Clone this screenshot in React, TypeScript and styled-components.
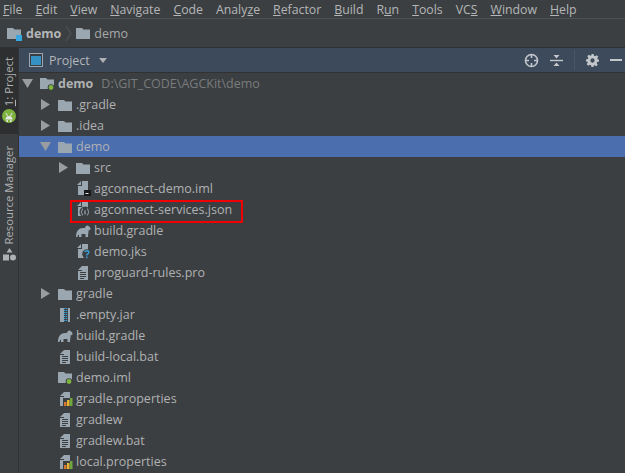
import * as React from "react";
import styled, { createGlobalStyle } from "styled-components";

const GlobalStyle = createGlobalStyle`
  html, body {
    margin: 0;
    padding: 0;
    width: 625px;
    height: 473px;
    overflow: hidden;
    background: #3c3f41;
  }
`;

type IconKind =
  | "folder"
  | "module"
  | "text"
  | "iml"
  | "json"
  | "gradle"
  | "keystore"
  | "jar"
  | "props";

interface Item {
  name: string;
  depth: number;
  icon: IconKind;
  arrow?: "open" | "closed";
  selected?: boolean;
  marked?: boolean;
  bold?: boolean;
  hint?: string;
}

const menus: [string, string, string][] = [
  ["", "F", "ile"],
  ["", "E", "dit"],
  ["", "V", "iew"],
  ["", "N", "avigate"],
  ["", "C", "ode"],
  ["Analy", "z", "e"],
  ["", "R", "efactor"],
  ["", "B", "uild"],
  ["R", "u", "n"],
  ["", "T", "ools"],
  ["VC", "S", ""],
  ["", "W", "indow"],
  ["", "H", "elp"],
];

const items: Item[] = [
  { name: "demo", depth: 0, icon: "module", arrow: "open", bold: true, hint: "D:\\GIT_CODE\\AGCKit\\demo" },
  { name: ".gradle", depth: 1, icon: "folder", arrow: "closed" },
  { name: ".idea", depth: 1, icon: "folder", arrow: "closed" },
  { name: "demo", depth: 1, icon: "folder", arrow: "open", selected: true },
  { name: "src", depth: 2, icon: "folder", arrow: "closed" },
  { name: "agconnect-demo.iml", depth: 2, icon: "iml" },
  { name: "agconnect-services.json", depth: 2, icon: "json", marked: true },
  { name: "build.gradle", depth: 2, icon: "gradle" },
  { name: "demo.jks", depth: 2, icon: "keystore" },
  { name: "proguard-rules.pro", depth: 2, icon: "text" },
  { name: "gradle", depth: 1, icon: "folder", arrow: "closed" },
  { name: ".empty.jar", depth: 1, icon: "jar" },
  { name: "build.gradle", depth: 1, icon: "gradle" },
  { name: "build-local.bat", depth: 1, icon: "text" },
  { name: "demo.iml", depth: 1, icon: "module" },
  { name: "gradle.properties", depth: 1, icon: "props" },
  { name: "gradlew", depth: 1, icon: "text" },
  { name: "gradlew.bat", depth: 1, icon: "text" },
  { name: "local.properties", depth: 1, icon: "props" },
];

const FOLDER = "M0 2h6l1.500 1.500H14V13H0z";
const SHEET = "M6 0h6v14H2V5h4z";
const FOLD = "M5 0v4H1z";

const FileIcon: React.FC<{ kind: IconKind }> = ({ kind }) => {
  switch (kind) {
    case "folder":
      return (
        <svg width="14" height="14" viewBox="0 0 14 14">
          <path d={FOLDER} fill="#9aa7b0" />
        </svg>
      );
    case "module":
      return (
        <svg width="15" height="15" viewBox="0 0 15 15">
          <path d={FOLDER} fill="#9aa7b0" />
          <circle cx="11" cy="11.500" r="3.300" fill="#3c3f41" />
          <circle cx="11" cy="11.500" r="2.400" fill="#7eb33f" />
        </svg>
      );
    case "text":
      return (
        <svg width="14" height="14" viewBox="0 0 14 14">
          <path d={SHEET} fill="#9aa7b0" />
          <path d={FOLD} fill="#9aa7b0" transform="translate(1 0)" />
          <path d="M4 6.500h6M4 8.500h6M4 10.500h6M4 12.500h4" stroke="#3c3f41" strokeWidth="1" />
        </svg>
      );
    case "iml":
      return (
        <svg width="15" height="15" viewBox="0 0 15 15">
          <path d={SHEET} fill="#9aa7b0" />
          <path d={FOLD} fill="#9aa7b0" />
          <rect x="8" y="9" width="7" height="6" fill="#17191a" />
          <path d="M9.500 12.500h3" stroke="#e8e8e8" strokeWidth="1" />
        </svg>
      );
    case "json":
      return (
        <svg width="15" height="15" viewBox="0 0 15 15">
          <path d={SHEET} fill="#9aa7b0" />
          <path d={FOLD} fill="#9aa7b0" />
          <circle cx="9" cy="10" r="5.500" fill="#3c3f41" />
          <path
            d="M7 6.500C5.500 7 6.500 9.200 5 10c1.500.8.500 3 2 3.500M11 6.500c1.500.5.500 2.700 2 3.500-1.500.8-.5 3-2 3.500"
            stroke="#9aa7b0"
            strokeWidth="1"
            fill="none"
          />
          <path d="M9 8.500v4" stroke="#9aa7b0" strokeWidth="1.200" />
        </svg>
      );
    case "gradle":
      return (
        <svg width="15" height="12" viewBox="0 0 15 12">
          <path
            d="M0 12C0 6 3 3 7 3h2c.5-2 2-3 3.500-2C14.500 2 15 4 14 5.500L12.800 4.500C12.500 7 12 10 12 12H9.500V9h-4v3H3V9.500C2 10 1.500 11 1.500 12z"
            fill="#9aa7b0"
          />
        </svg>
      );
    case "keystore":
      return (
        <svg width="15" height="15" viewBox="0 0 15 15">
          <path d={SHEET} fill="#9aa7b0" />
          <path d={FOLD} fill="#9aa7b0" />
          <circle cx="11" cy="10" r="4.800" fill="#3c3f41" />
          <path d="M8.800 8.200c.3-2 4-2 4 .1 0 1.600-2 1.500-2 3.200" stroke="#389fd6" strokeWidth="1.500" fill="none" />
          <rect x="10" y="12.600" width="1.600" height="1.600" fill="#389fd6" />
        </svg>
      );
    case "jar":
      return (
        <svg width="14" height="14" viewBox="0 0 14 14">
          <rect x="2" y="0" width="10" height="14" fill="#9aa7b0" />
          <rect x="6" y="0" width="4" height="14" fill="#3c3f41" />
          <path d="M6.500 0v14M8.500 0v14" stroke="#389fd6" strokeWidth="1.500" strokeDasharray="1 1" />
        </svg>
      );
    case "props":
      return (
        <svg width="16" height="14" viewBox="0 0 16 14">
          <path d={SHEET} fill="#9aa7b0" />
          <path d={FOLD} fill="#9aa7b0" transform="translate(1 0)" />
          <rect x="5" y="6" width="11" height="8" fill="#3c3f41" />
          <rect x="6" y="10" width="2.500" height="4" fill="#d9762e" />
          <rect x="9" y="8" width="2.500" height="6" fill="#e8b530" />
          <rect x="12" y="6" width="2.500" height="8" fill="#6ea83c" />
        </svg>
      );
    default:
      return null;
  }
};

const App: React.FC = () => (
  <Window>
    <GlobalStyle />
    <MenuBar>
      {menus.map(([before, key, after]) => (
        <MenuItem key={before + key + after}>
          {before}
          <u>{key}</u>
          {after}
        </MenuItem>
      ))}
    </MenuBar>
    <Breadcrumb>
      <CrumbIcon>
        <svg width="15" height="15" viewBox="0 0 15 15">
          <path d={FOLDER} fill="#9aa7b0" />
          <rect x="9" y="9" width="6" height="6" fill="#3aa8e0" />
        </svg>
      </CrumbIcon>
      <CrumbBold>demo</CrumbBold>
      <svg width="7" height="17" viewBox="0 0 7 17">
        <path d="M1 1l5 7.500L1 16" stroke="#55585a" fill="none" />
      </svg>
      <CrumbIcon>
        <svg width="14" height="14" viewBox="0 0 14 14">
          <path d={FOLDER} fill="#9aa7b0" />
        </svg>
      </CrumbIcon>
      <CrumbText>demo</CrumbText>
    </Breadcrumb>
    <Body>
      <SideStrip>
        <SideTabActive>
          <SideLabel>
            <u>1</u>: Project
          </SideLabel>
          <svg width="14" height="14" viewBox="0 0 14 14">
            <circle cx="7" cy="7" r="7" fill="#7eb33f" />
            <path d="M3.500 10.500a3.500 3.500 0 0 1 7 0z" fill="#e6e6e6" />
            <path d="M4 4l1.500 3M10 4L8.500 7" stroke="#e6e6e6" />
            <path d="M4.500 11h1.500v2H4.500zM8 11h1.500v2H8z" fill="#e6e6e6" />
          </svg>
        </SideTabActive>
        <SideTab>
          <SideLabel>Resource Manager</SideLabel>
          <svg width="13" height="13" viewBox="0 0 13 13">
            <path d="M6.500 0l3 4.500h-6z" fill="#afb1b3" />
            <rect x="0" y="6.500" width="6" height="6" fill="#afb1b3" />
            <circle cx="10" cy="9.500" r="3" fill="#afb1b3" />
          </svg>
        </SideTab>
      </SideStrip>
      <Panel>
        <PanelHeader>
          <svg width="14" height="14" viewBox="0 0 14 14">
            <rect x="0.500" y="0.500" width="13" height="13" fill="#3c3f41" stroke="#9aa7b0" />
            <rect x="2" y="3" width="10" height="9" fill="#3592c4" />
          </svg>
          <PanelTitle>Project</PanelTitle>
          <svg width="8" height="5" viewBox="0 0 8 5">
            <path d="M0 0h8L4 5z" fill="#afb1b3" />
          </svg>
          <PanelTools>
            <svg width="15" height="15" viewBox="0 0 15 15">
              <circle cx="7.500" cy="7.500" r="6" stroke="#c4c7c9" strokeWidth="1.600" fill="none" />
              <path d="M7.500 1v4M7.500 10v4M1 7.500h4M10 7.500h4" stroke="#c4c7c9" strokeWidth="1.600" />
            </svg>
            <svg width="13" height="13" viewBox="0 0 13 13">
              <path d="M0 6.500h13" stroke="#c4c7c9" strokeWidth="1.400" />
              <path d="M3.500 1h6L6.500 4.500zM3.500 12h6L6.500 8.500z" fill="#c4c7c9" />
            </svg>
            <ToolDivider />
            <svg width="13" height="13" viewBox="0 0 24 24">
              <path
                fillRule="evenodd"
                d="M10 0h4l.7 3.400 2.200.9 2.900-1.900 2.800 2.800-1.900 2.900.9 2.200L24 10v4l-3.400.7-.9 2.200 1.900 2.900-2.800 2.800-2.900-1.900-2.200.9L14 24h-4l-.7-3.400-2.200-.9-2.900 1.900-2.800-2.800 1.900-2.900-.9-2.200L0 14v-4l3.400-.7.9-2.200-1.900-2.900 2.800-2.800 2.900 1.900 2.200-.9zM12 8a4 4 0 1 0 0 8 4 4 0 0 0 0-8z"
                fill="#c4c7c9"
              />
            </svg>
            <MinusBar />
          </PanelTools>
        </PanelHeader>
        <Tree>
          {items.map((item, i) => (
            <Row key={i} $selected={item.selected} $depth={item.depth}>
              <Arrow>
                {item.arrow === "open" && (
                  <svg width="11" height="9" viewBox="0 0 11 9">
                    <path d="M0 0h11L5.500 9z" fill="#9a9d9f" />
                  </svg>
                )}
                {item.arrow === "closed" && (
                  <svg width="9" height="11" viewBox="0 0 9 11">
                    <path d="M0 0l9 5.500L0 11z" fill="#9a9d9f" />
                  </svg>
                )}
              </Arrow>
              <IconSlot>
                <FileIcon kind={item.icon} />
              </IconSlot>
              <Name $bold={item.bold}>{item.name}</Name>
              {item.hint && <Hint>{item.hint}</Hint>}
              {item.marked && <Marker />}
            </Row>
          ))}
        </Tree>
      </Panel>
    </Body>
  </Window>
);

const Window = styled.div`
  width: 625px;
  height: 473px;
  display: flex;
  flex-direction: column;
  overflow: hidden;
  background: #3c3f41;
  color: #afb1b3;
  font-family: "Open Sans", sans-serif;
  font-size: 12.500px;
`;

const MenuBar = styled.div`
  height: 18px;
  flex: none;
  display: flex;
  align-items: center;
  gap: 13px;
  padding-left: 3px;
  border-bottom: 1px solid #515151;
`;

const MenuItem = styled.span`
  color: #b4b6b8;
  font-size: 12.300px;
`;

const Breadcrumb = styled.div`
  height: 28px;
  flex: none;
  display: flex;
  align-items: center;
  gap: 4px;
  padding-left: 7px;
  border-bottom: 1px solid #2f3133;
`;

const CrumbIcon = styled.span`
  display: flex;
`;

const CrumbBold = styled.span`
  font-weight: 700;
  color: #b4b6b8;
`;

const CrumbText = styled.span`
  color: #a6a8aa;
`;

const Body = styled.div`
  flex: 1;
  min-height: 0;
  display: flex;
`;

const SideStrip = styled.div`
  width: 18px;
  flex: none;
  display: flex;
  flex-direction: column;
  border-right: 1px solid #323232;
`;

const SideTabActive = styled.div`
  display: flex;
  flex-direction: column;
  align-items: center;
  gap: 3px;
  height: 86px;
  padding-top: 9px;
  box-sizing: border-box;
  background: #2d2f30;
`;

const SideTab = styled.div`
  display: flex;
  flex-direction: column;
  align-items: center;
  gap: 4px;
  padding-top: 12px;
`;

const SideLabel = styled.span`
  writing-mode: vertical-rl;
  transform: rotate(180deg);
  font-size: 11.300px;
  line-height: 18px;
  white-space: nowrap;
`;

const Panel = styled.div`
  flex: 1;
  min-width: 0;
  display: flex;
  flex-direction: column;
`;

const PanelHeader = styled.div`
  height: 24px;
  flex: none;
  display: flex;
  align-items: center;
  gap: 6px;
  padding-left: 10px;
  background: #3c4a5c;
  border-bottom: 1px solid #323232;
`;

const PanelTitle = styled.span`
  margin-right: 3px;
  color: #b4b6b8;
`;

const PanelTools = styled.div`
  margin-left: auto;
  display: flex;
  align-items: center;
  gap: 11px;
  padding-right: 3px;
`;

const ToolDivider = styled.span`
  width: 1px;
  height: 20px;
  background: #4a5868;
`;

const MinusBar = styled.span`
  width: 12px;
  height: 2px;
  background: #c4c7c9;
`;

const Tree = styled.div`
  display: flex;
  flex-direction: column;
`;

const Row = styled.div<{ $selected?: boolean; $depth: number }>`
  position: relative;
  height: 21px;
  flex: none;
  display: flex;
  align-items: center;
  padding-left: ${(p) => 18 * p.$depth}px;
  background: ${(p) => (p.$selected ? "#4b6eaf" : "transparent")};
`;

const Arrow = styled.span`
  width: 21px;
  flex: none;
  display: flex;
  justify-content: center;
  padding-right: 5px;
  box-sizing: border-box;
`;

const IconSlot = styled.span`
  width: 18px;
  flex: none;
  display: flex;
  align-items: center;
`;

const Name = styled.span<{ $bold?: boolean }>`
  font-weight: ${(p) => (p.$bold ? 700 : 400)};
  white-space: nowrap;
`;

const Hint = styled.span`
  margin-left: 8px;
  color: #787b7d;
  white-space: nowrap;
`;

const Marker = styled.span`
  position: absolute;
  left: 51px;
  top: 1px;
  width: 169px;
  height: 19px;
  border: 2px solid #f00000;
`;

export default App;
